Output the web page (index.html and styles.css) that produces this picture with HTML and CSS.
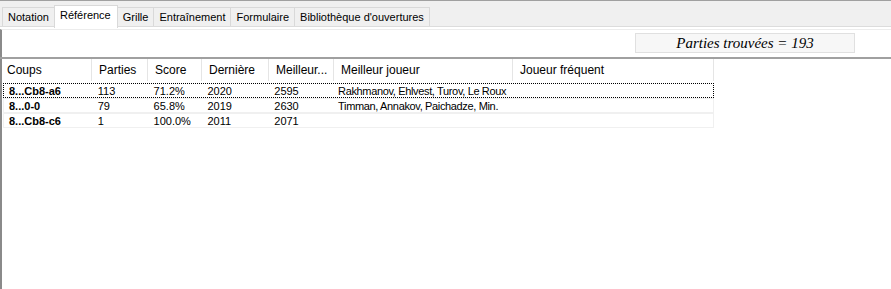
FILE: index.html
```html
<!DOCTYPE HTML>
<html>
<head>
	<title>Référence</title>
	<meta charset="UTF-8">
	<link rel="stylesheet" href="styles.css">
</head>
<body>

<div class="tabbar">
	<span class="tab">Notation</span>
	<span class="tab active">Référence</span>
	<span class="tab">Grille</span>
	<span class="tab">Entraînement</span>
	<span class="tab">Formulaire</span>
	<span class="tab">Bibliothèque d'ouvertures</span>
</div>

<div class="panel">

	<div class="found-row">
		<div class="found">Parties trouvées = 193</div>
	</div>

	<div class="list">
		<div class="head">
			<span class="c1">Coups</span>
			<span class="c2">Parties</span>
			<span class="c3">Score</span>
			<span class="c4">Dernière</span>
			<span class="c5">Meilleur...</span>
			<span class="c6">Meilleur joueur</span>
			<span class="c7">Joueur fréquent</span>
		</div>

		<div class="row focus">
			<span class="c1 move">8...Cb8-a6</span>
			<span class="c2">113</span>
			<span class="c3">71.2%</span>
			<span class="c4">2020</span>
			<span class="c5">2595</span>
			<span class="c6 names">Rakhmanov, Ehlvest, Turov, Le Roux</span>
			<span class="c7"></span>
		</div>
		<div class="row">
			<span class="c1 move">8...0-0</span>
			<span class="c2">79</span>
			<span class="c3">65.8%</span>
			<span class="c4">2019</span>
			<span class="c5">2630</span>
			<span class="c6 names">Timman, Annakov, Paichadze, Min.</span>
			<span class="c7"></span>
		</div>
		<div class="row">
			<span class="c1 move">8...Cb8-c6</span>
			<span class="c2">1</span>
			<span class="c3">100.0%</span>
			<span class="c4">2011</span>
			<span class="c5">2071</span>
			<span class="c6"></span>
			<span class="c7"></span>
		</div>
	</div>

</div>

</body>
</html>
```

FILE: styles.css
```css
body {
	margin: 0;
	font-family: "Liberation Sans", Arial, sans-serif;
	font-size: 11px;
	color: #000;
	background: #fff;
	height: 289px;
	overflow: hidden;
}

/* barre des onglets */
.tabbar {
	border-top: 1px solid #a0a0a0;
	background: #f0f0f0;
	height: 27px;
	box-sizing: border-box;
	padding: 7px 0 0 3px;
	display: flex;
	align-items: flex-end;
	border-bottom: 1px solid #dcdcdc;
}

.tab {
	height: 19px;
	line-height: 18px;
	padding: 0 5px;
	border: 1px solid #d9d9d9;
	border-bottom: none;
	margin-left: -1px;
	box-sizing: border-box;
	background: #f0f0f0;
}

.tab.active {
	background: #fff;
	height: 23px;
	line-height: 19px;
	margin-bottom: -2px;
	padding: 0 6px 0 5px;
	position: relative;
}

.panel {
	border-left: 2px solid #8a8a8a;
	border-top: 1px solid #ececec;
	margin-top: 2px;
	height: 260px;
}

.found-row {
	display: flex;
	justify-content: flex-end;
	padding: 3px 36px 0 0;
	height: 27px;
	box-sizing: border-box;
}

.found {
	width: 220px;
	height: 20px;
	box-sizing: border-box;
	background: #f7f7f7;
	border: 1px solid #e0e0e0;
	font-family: "Liberation Serif", "Times New Roman", serif;
	font-style: italic;
	font-size: 15px;
	text-align: center;
	line-height: 18px;
}

/* liste des coups */
.list {
	margin-left: -2px;
	border-top: 2px solid #a0a0a0;
}

.head,
.row {
	display: flex;
	white-space: nowrap;
}

.head {
	height: 22px;
	line-height: 22px;
	margin-bottom: 2px;
	font-size: 12px;
}

.head span {
	border-right: 1px solid #e5e5e5;
	padding-left: 7px;
	box-sizing: border-box;
	overflow: hidden;
}

.row {
	width: 711px;
	height: 15px;
	line-height: 14px;
	box-sizing: border-box;
	margin-left: 3px;
	border: 1px solid #f0f0f0;
}

.row.focus {
	border: 1px dotted #000;
}

.row span {
	padding-left: 5px;
	box-sizing: border-box;
	overflow: hidden;
}

.row .names {
	padding-left: 4px;
	letter-spacing: -0.35px;
}

.c1 { width: 92px; }
.c2 { width: 56px; }
.c3 { width: 54px; }
.c4 { width: 67px; }
.c5 { width: 65px; }
.c6 { width: 179px; }
.c7 { width: 201px; }

.row .c1 { width: 89px; }

.move {
	font-weight: bold;
}
```
